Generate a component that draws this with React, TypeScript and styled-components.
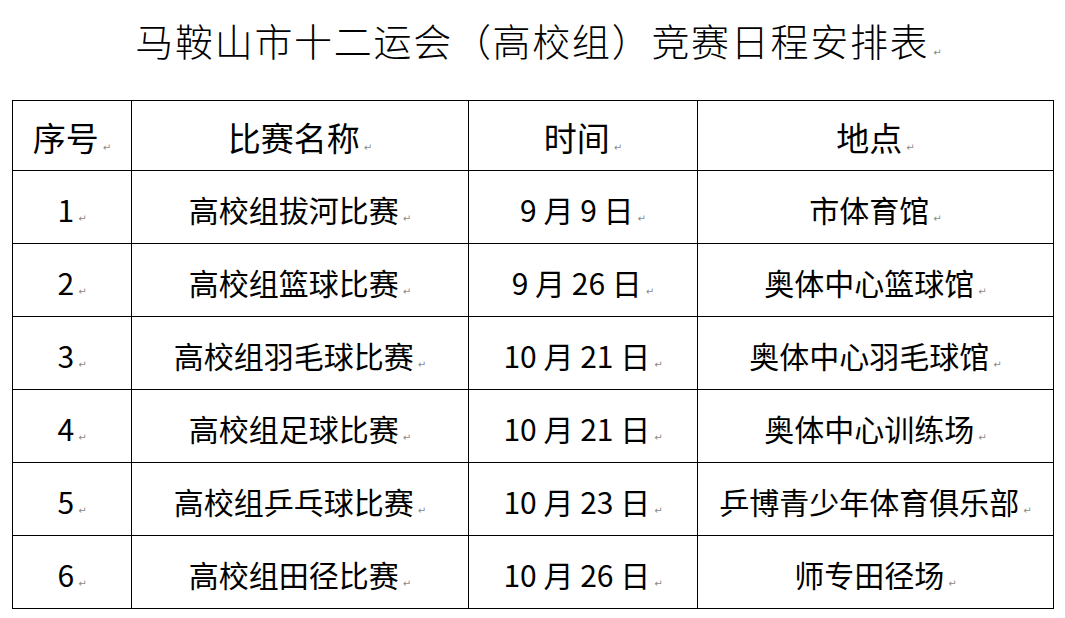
import styled, { createGlobalStyle } from 'styled-components';

const GlobalStyle = createGlobalStyle`
  html, body {
    margin: 0;
    padding: 0;
    background: #ffffff;
  }
  body {
    font-family: 'Noto Sans CJK SC', 'Noto Sans', sans-serif;
    color: #000;
  }
`;

const schedule = [
  { no: '1', name: '高校组拔河比赛', date: '9 月 9 日', place: '市体育馆' },
  { no: '2', name: '高校组篮球比赛', date: '9 月 26 日', place: '奥体中心篮球馆' },
  { no: '3', name: '高校组羽毛球比赛', date: '10 月 21 日', place: '奥体中心羽毛球馆' },
  { no: '4', name: '高校组足球比赛', date: '10 月 21 日', place: '奥体中心训练场' },
  { no: '5', name: '高校组乒乓球比赛', date: '10 月 23 日', place: '乒博青少年体育俱乐部' },
  { no: '6', name: '高校组田径比赛', date: '10 月 26 日', place: '师专田径场' },
];

const Mark = () => <ParaMark>↵</ParaMark>;

const App = () => {
  return (
    <Page>
      <GlobalStyle />
      <Title>
        马鞍山市十二运会（高校组）竞赛日程安排表
        <Mark />
      </Title>
      <Table>
        <colgroup>
          <col style={{ width: 119 }} />
          <col style={{ width: 337 }} />
          <col style={{ width: 229 }} />
          <col style={{ width: 356 }} />
        </colgroup>
        <thead>
          <tr>
            <HeadCell>序号<Mark /></HeadCell>
            <HeadCell>比赛名称<Mark /></HeadCell>
            <HeadCell>时间<Mark /></HeadCell>
            <HeadCell>地点<Mark /></HeadCell>
          </tr>
        </thead>
        <tbody>
          {schedule.map(row => (
            <tr key={row.no}>
              <Cell>{row.no}<Mark /></Cell>
              <Cell>{row.name}<Mark /></Cell>
              <Cell>{row.date}<Mark /></Cell>
              <Cell>{row.place}<Mark /></Cell>
            </tr>
          ))}
        </tbody>
      </Table>
    </Page>
  );
};

const Page = styled.div`
  width: 1065px;
  height: 618px;
  padding: 0 0 0 12px;
  box-sizing: border-box;
`;

const Title = styled.h1`
  margin: 0;
  height: 100px;
  padding-top: 14px;
  box-sizing: border-box;
  text-align: center;
  font-size: 38px;
  line-height: 52px;
  font-weight: 300;
  letter-spacing: 1.7px;
`;

const ParaMark = styled.span`
  font-family: 'DejaVu Sans', sans-serif;
  font-size: 10px;
  font-weight: 400;
  color: #8a8a8a;
  margin-left: 4px;
  letter-spacing: 0;
`;

const Table = styled.table`
  width: 1041px;
  border-collapse: collapse;
  table-layout: fixed;
`;

const HeadCell = styled.th`
  box-sizing: border-box;
  height: 70px;
  padding: 3px 0 0;
  border: 1px solid #000;
  text-align: center;
  vertical-align: middle;
  font-size: 33px;
  font-weight: 400;
  line-height: 1;
`;

const Cell = styled.td`
  box-sizing: border-box;
  height: 73px;
  padding: 4px 0 0;
  border: 1px solid #000;
  text-align: center;
  vertical-align: middle;
  font-size: 30px;
  line-height: 1;
  white-space: pre;
`;

export default App;
